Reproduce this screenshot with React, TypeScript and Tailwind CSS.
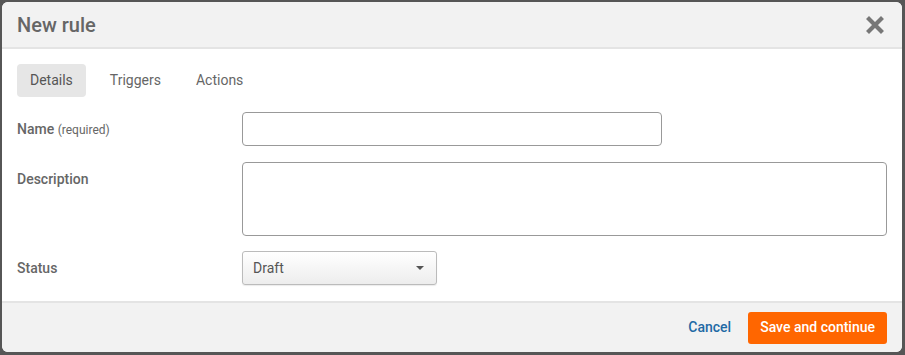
import { useState } from "react"

export default function App() {
    const [tab, setTab] = useState("Details")
    const tabs = ["Details", "Triggers", "Actions"]

    return (
        <div className="w-[905px] h-[355px] bg-[#565656] pt-[2px] pl-[2px] font-['Roboto',sans-serif]">
            <div className="w-[900px] h-[350px] bg-white rounded-[6px] overflow-hidden flex flex-col">
                <div className="h-[47px] shrink-0 bg-[#f2f2f2] border-b-2 border-[#e4e4e4] flex items-center justify-between pl-[15px] pr-[18px]">
                    <h1 className="text-[20px] font-medium text-[#666666]">New rule</h1>
                    <svg width="18" height="18" viewBox="0 0 18 18" className="mt-[1px]">
                        <path d="M3 3 L15 15 M15 3 L3 15" stroke="#777777" strokeWidth="4.2" strokeLinecap="square" />
                    </svg>
                </div>

                <div className="flex-1 px-[15px] pt-[15px]">
                    <div className="flex gap-[13px]">
                        {tabs.map((t) => (
                            <button key={t} onClick={() => setTab(t)}
                                className={`h-[33px] rounded-[4px] text-[14px] ${tab === t ? "bg-[#e6e6e6] text-[#555555] px-[13px]" : "text-[#666666] px-[11px]"}`}>
                                {t}
                            </button>
                        ))}
                    </div>

                    <div className="mt-[15px] flex flex-col gap-[16px]">
                        <div className="flex items-center">
                            <label className="w-[225px] text-[14px] font-medium text-[#666666]">
                                Name <span className="text-[12px] font-normal">(required)</span>
                            </label>
                            <input className="w-[420px] h-[34px] border border-[#999999] rounded-[4px] px-2 text-[14px] outline-none" />
                        </div>
                        <div className="flex items-start">
                            <label className="w-[225px] pt-[7px] text-[14px] font-medium text-[#666666]">Description</label>
                            <textarea className="w-[645px] h-[74px] border border-[#999999] rounded-[4px] px-2 py-1 text-[14px] outline-none resize-none" />
                        </div>
                        <div className="flex items-center -mt-[1px]">
                            <label className="w-[225px] text-[14px] font-medium text-[#666666]">Status</label>
                            <div className="w-[195px] h-[34px] border border-[#bbbbbb] rounded-[3px] bg-gradient-to-b from-white to-[#ededed] flex items-center justify-between pl-[10px] pr-[12px] shadow-[0_1px_1px_rgba(0,0,0,0.08)]">
                                <span className="text-[14px] text-[#555555]">Draft</span>
                                <span className="w-0 h-0 border-l-[4px] border-r-[4px] border-t-[4px] border-l-transparent border-r-transparent border-t-[#555555]" />
                            </div>
                        </div>
                    </div>
                </div>

                <div className="h-[51px] shrink-0 bg-[#f2f2f2] border-t-2 border-[#e4e4e4] flex items-center justify-end gap-[17px] pr-[15px]">
                    <a className="text-[14px] font-medium text-[#1f6aa5]">Cancel</a>
                    <button className="h-[32px] px-[12px] rounded-[3px] bg-[#ff6600] text-white text-[14px] font-medium">Save and continue</button>
                </div>
            </div>
        </div>
    )
}
